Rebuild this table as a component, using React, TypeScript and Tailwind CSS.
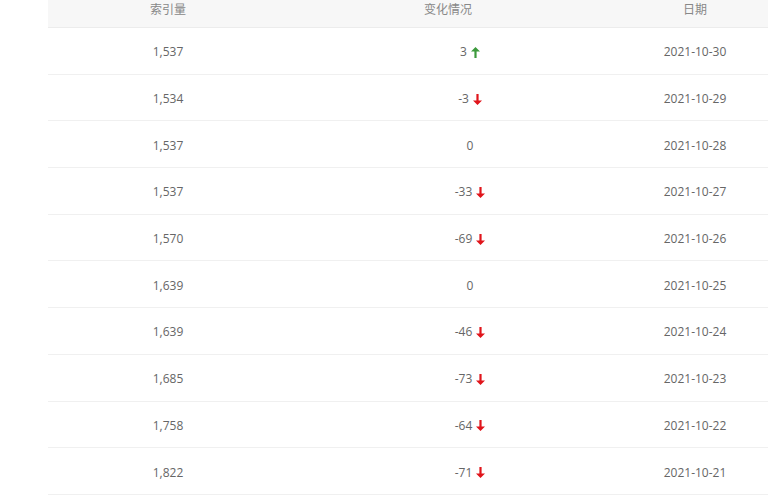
import React from 'react';

const rows = [
  { count: '1,537', change: 3, date: '2021-10-30' },
  { count: '1,534', change: -3, date: '2021-10-29' },
  { count: '1,537', change: 0, date: '2021-10-28' },
  { count: '1,537', change: -33, date: '2021-10-27' },
  { count: '1,570', change: -69, date: '2021-10-26' },
  { count: '1,639', change: 0, date: '2021-10-25' },
  { count: '1,639', change: -46, date: '2021-10-24' },
  { count: '1,685', change: -73, date: '2021-10-23' },
  { count: '1,758', change: -64, date: '2021-10-22' },
  { count: '1,822', change: -71, date: '2021-10-21' },
];

const Arrow = ({ up }: { up: boolean }) => (
  <svg width="9" height="11" viewBox="0 0 9 11" className={up ? 'text-[#3c9a3c]' : 'text-[#e0151b]'}>
    {up ? (
      <path d="M4.5 0 L9 4.5 L5.6 4.5 L5.6 11 L3.4 11 L3.4 4.5 L0 4.5 Z" fill="currentColor" />
    ) : (
      <path d="M3.4 0 L5.6 0 L5.6 6.5 L9 6.5 L4.5 11 L0 6.5 L3.4 6.5 Z" fill="currentColor" />
    )}
  </svg>
);

const App = () => {
  return (
    <div className="w-[768px] h-[499px] overflow-hidden bg-white font-['Open_Sans','Noto_Sans_CJK_SC',sans-serif] text-[12px]">
      <div className="ml-[48px] w-[740px]">
        <div className="flex h-[28px] items-start pt-[1px] leading-[18px] bg-[#f7f7f7] border-b border-[#ececec] text-[#888]">
          <div className="w-[240px] text-center">索引量</div>
          <div className="w-[320px] text-center">变化情况</div>
          <div className="w-[174px] text-center">日期</div>
        </div>
        {rows.map((r, i) => (
          <div key={i} className="flex h-[46.7px] items-center pt-[3px] border-b border-[#f0f0f0] text-[#666]">
            <div className="w-[240px] text-center">{r.count}</div>
            <div className="w-[320px] flex justify-center pl-[44px]">
              <span className="flex items-center gap-[4px]">
                {r.change}
                {r.change !== 0 && <Arrow up={r.change > 0} />}
              </span>
            </div>
            <div className="w-[174px] text-center">{r.date}</div>
          </div>
        ))}
      </div>
    </div>
  );
};

export default App;
